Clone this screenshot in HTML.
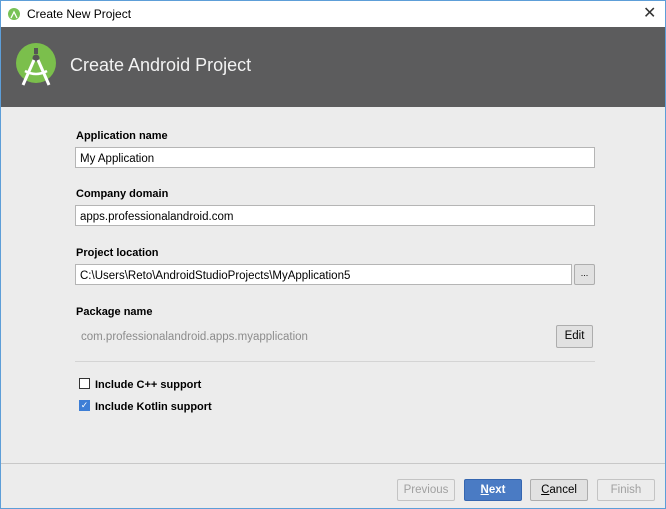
<!DOCTYPE html>
<html><head><style>
*{margin:0;padding:0;box-sizing:border-box}
body{width:666px;height:509px;overflow:hidden;font-family:"Liberation Sans",sans-serif;font-size:12px;background:#ececec;position:relative;color:#000}
.win{position:absolute;inset:0;border:1px solid #5d9ed8}
.title{position:absolute;left:1px;right:1px;top:1px;height:26px;background:#fff}
.title span{position:absolute;left:26px;top:6px;font-size:12px;color:#000}
.hdr{position:absolute;left:1px;right:1px;top:27px;height:80px;background:#5c5c5d}
.hdr span{position:absolute;left:69px;top:28px;color:#f2f2f2;font-size:18px}
.lbl{position:absolute;left:76px;font-weight:bold;font-size:11px}
.inp{position:absolute;left:75px;height:21px;background:#fff;border:1px solid #b5b5b5;padding:5px 4px 0;font-size:11.5px;line-height:12px}
.btn{position:absolute;height:22px;border:1px solid #adadad;background:#e1e1e1;text-align:center;font-size:11.5px;line-height:20px;border-radius:2px}
</style></head><body>
<div class="win"></div>
<div class="title">
<svg style="position:absolute;left:7px;top:7px" width="12" height="12"><circle cx="6" cy="6" r="6" fill="#78c257"/><path d="M3 10 L6 4 L9 10" stroke="#fff" stroke-width="1.3" fill="none"/></svg>
<span>Create New Project</span>
<span style="left:642px;top:2px;font-size:16px;color:#333">✕</span>
</div>
<div class="hdr">
<svg style="position:absolute;left:15px;top:16px" width="42" height="48" viewBox="0 0 42 48">
<circle cx="20" cy="20" r="20" fill="#7bbf4c"/>
<rect x="18" y="5" width="4" height="6" fill="#555"/>
<circle cx="20" cy="15" r="3.5" fill="#555"/>
<path d="M18 17 L7 42 M22 17 L33 42" stroke="#fff" stroke-width="3" fill="none"/>
<path d="M9 28 Q20 34 31 28" stroke="#fff" stroke-width="2.5" fill="none"/>
</svg>
<span>Create Android Project</span>
</div>
<div class="lbl" style="top:130px">Application name</div>
<div class="inp" style="top:147px;width:520px">My Application</div>
<div class="lbl" style="top:188px">Company domain</div>
<div class="inp" style="top:205px;width:520px">apps.professionalandroid.com</div>
<div class="lbl" style="top:247px">Project location</div>
<div class="inp" style="top:264px;width:497px">C:\Users\Reto\AndroidStudioProjects\MyApplication5</div>
<div class="btn" style="left:574px;top:264px;width:21px;height:21px;line-height:16px;font-size:9px">...</div>
<div class="lbl" style="top:306px">Package name</div>
<div style="position:absolute;left:81px;top:331px;color:#8c8c8c;font-size:11.5px">com.professionalandroid.apps.myapplication</div>
<div class="btn" style="left:556px;top:325px;width:37px;height:23px;line-height:21px">Edit</div>
<div style="position:absolute;left:75px;top:361px;width:520px;height:1px;background:#d4d4d4"></div>
<div style="position:absolute;left:79px;top:378px;width:11px;height:11px;border:1px solid #333;background:#fff"></div>
<div class="lbl" style="left:95px;top:379px">Include C++ support</div>
<div style="position:absolute;left:79px;top:400px;width:11px;height:11px;background:#3d7ed6;color:#fff;font-size:9px;line-height:11px;text-align:center">✓</div>
<div class="lbl" style="left:95px;top:401px">Include Kotlin support</div>
<div style="position:absolute;left:1px;right:1px;top:463px;height:1px;background:#c8c8c8"></div>
<div class="btn" style="left:397px;top:479px;width:58px;color:#a0a0a0;background:#ececec;border-color:#c4c4c4">Previous</div>
<div class="btn" style="left:464px;top:479px;width:58px;background:#4a7bc4;border-color:#3566b0;color:#fff;font-weight:bold"><u>N</u>ext</div>
<div class="btn" style="left:530px;top:479px;width:58px"><u>C</u>ancel</div>
<div class="btn" style="left:597px;top:479px;width:58px;color:#a0a0a0;background:#ececec;border-color:#c4c4c4">Finish</div>
</body></html>
